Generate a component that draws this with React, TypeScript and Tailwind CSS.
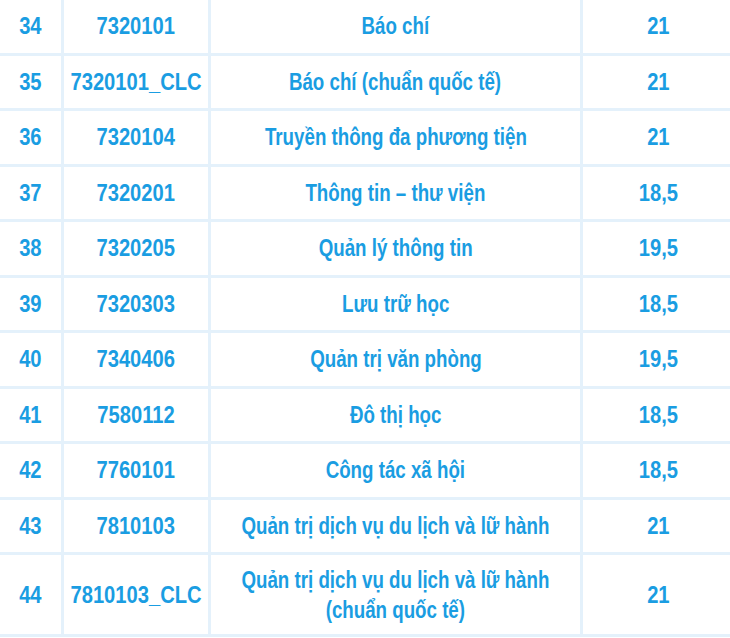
const rows: [string, string, string, string][] = [
  ['34', '7320101', 'Báo chí', '21'],
  ['35', '7320101_CLC', 'Báo chí (chuẩn quốc tế)', '21'],
  ['36', '7320104', 'Truyền thông đa phương tiện', '21'],
  ['37', '7320201', 'Thông tin – thư viện', '18,5'],
  ['38', '7320205', 'Quản lý thông tin', '19,5'],
  ['39', '7320303', 'Lưu trữ học', '18,5'],
  ['40', '7340406', 'Quản trị văn phòng', '19,5'],
  ['41', '7580112', 'Đô thị học', '18,5'],
  ['42', '7760101', 'Công tác xã hội', '18,5'],
  ['43', '7810103', 'Quản trị dịch vụ du lịch và lữ hành', '21'],
];

const cell = 'border-[3px] border-[#e4f1fb] align-middle p-0';

// condensed look: Liberation Sans squeezed horizontally, centred even when wider than the cell
function Txt({ children }: { children: React.ReactNode }) {
  return (
    <div className="flex justify-center">
      <span className="shrink-0 whitespace-nowrap scale-x-[0.78]">{children}</span>
    </div>
  );
}

function Num({ children }: { children: React.ReactNode }) {
  return (
    <div className="flex justify-center">
      <span className="shrink-0 whitespace-nowrap scale-x-[0.84]">{children}</span>
    </div>
  );
}

export default function App() {
  return (
    <div className="w-[730px] h-[638px] overflow-hidden bg-white">
      <table
        className="table-fixed w-[736px] -ml-[3px] -mt-[3px] border-collapse text-[#1a9de2] font-bold text-[24px] leading-[30px]"
        style={{ fontFamily: '"Liberation Sans", Arial, sans-serif' }}
      >
        <colgroup>
          <col className="w-[64px]" />
          <col className="w-[147px]" />
          <col className="w-[372px]" />
          <col className="w-[153px]" />
        </colgroup>
        <tbody>
          {rows.map((r) => (
            <tr key={r[0]} className="h-[55.5px]">
              <td className={cell}><Num>{r[0]}</Num></td>
              <td className={cell}><Num>{r[1]}</Num></td>
              <td className={cell}><Txt>{r[2]}</Txt></td>
              <td className={cell}><Num>{r[3]}</Num></td>
            </tr>
          ))}
          <tr className="h-[82px]">
            <td className={cell}><Num>44</Num></td>
            <td className={cell}><Num>7810103_CLC</Num></td>
            <td className={cell}>
              <Txt>Quản trị dịch vụ du lịch và lữ hành</Txt>
              <Txt>(chuẩn quốc tế)</Txt>
            </td>
            <td className={cell}><Num>21</Num></td>
          </tr>
        </tbody>
      </table>
    </div>
  );
}
